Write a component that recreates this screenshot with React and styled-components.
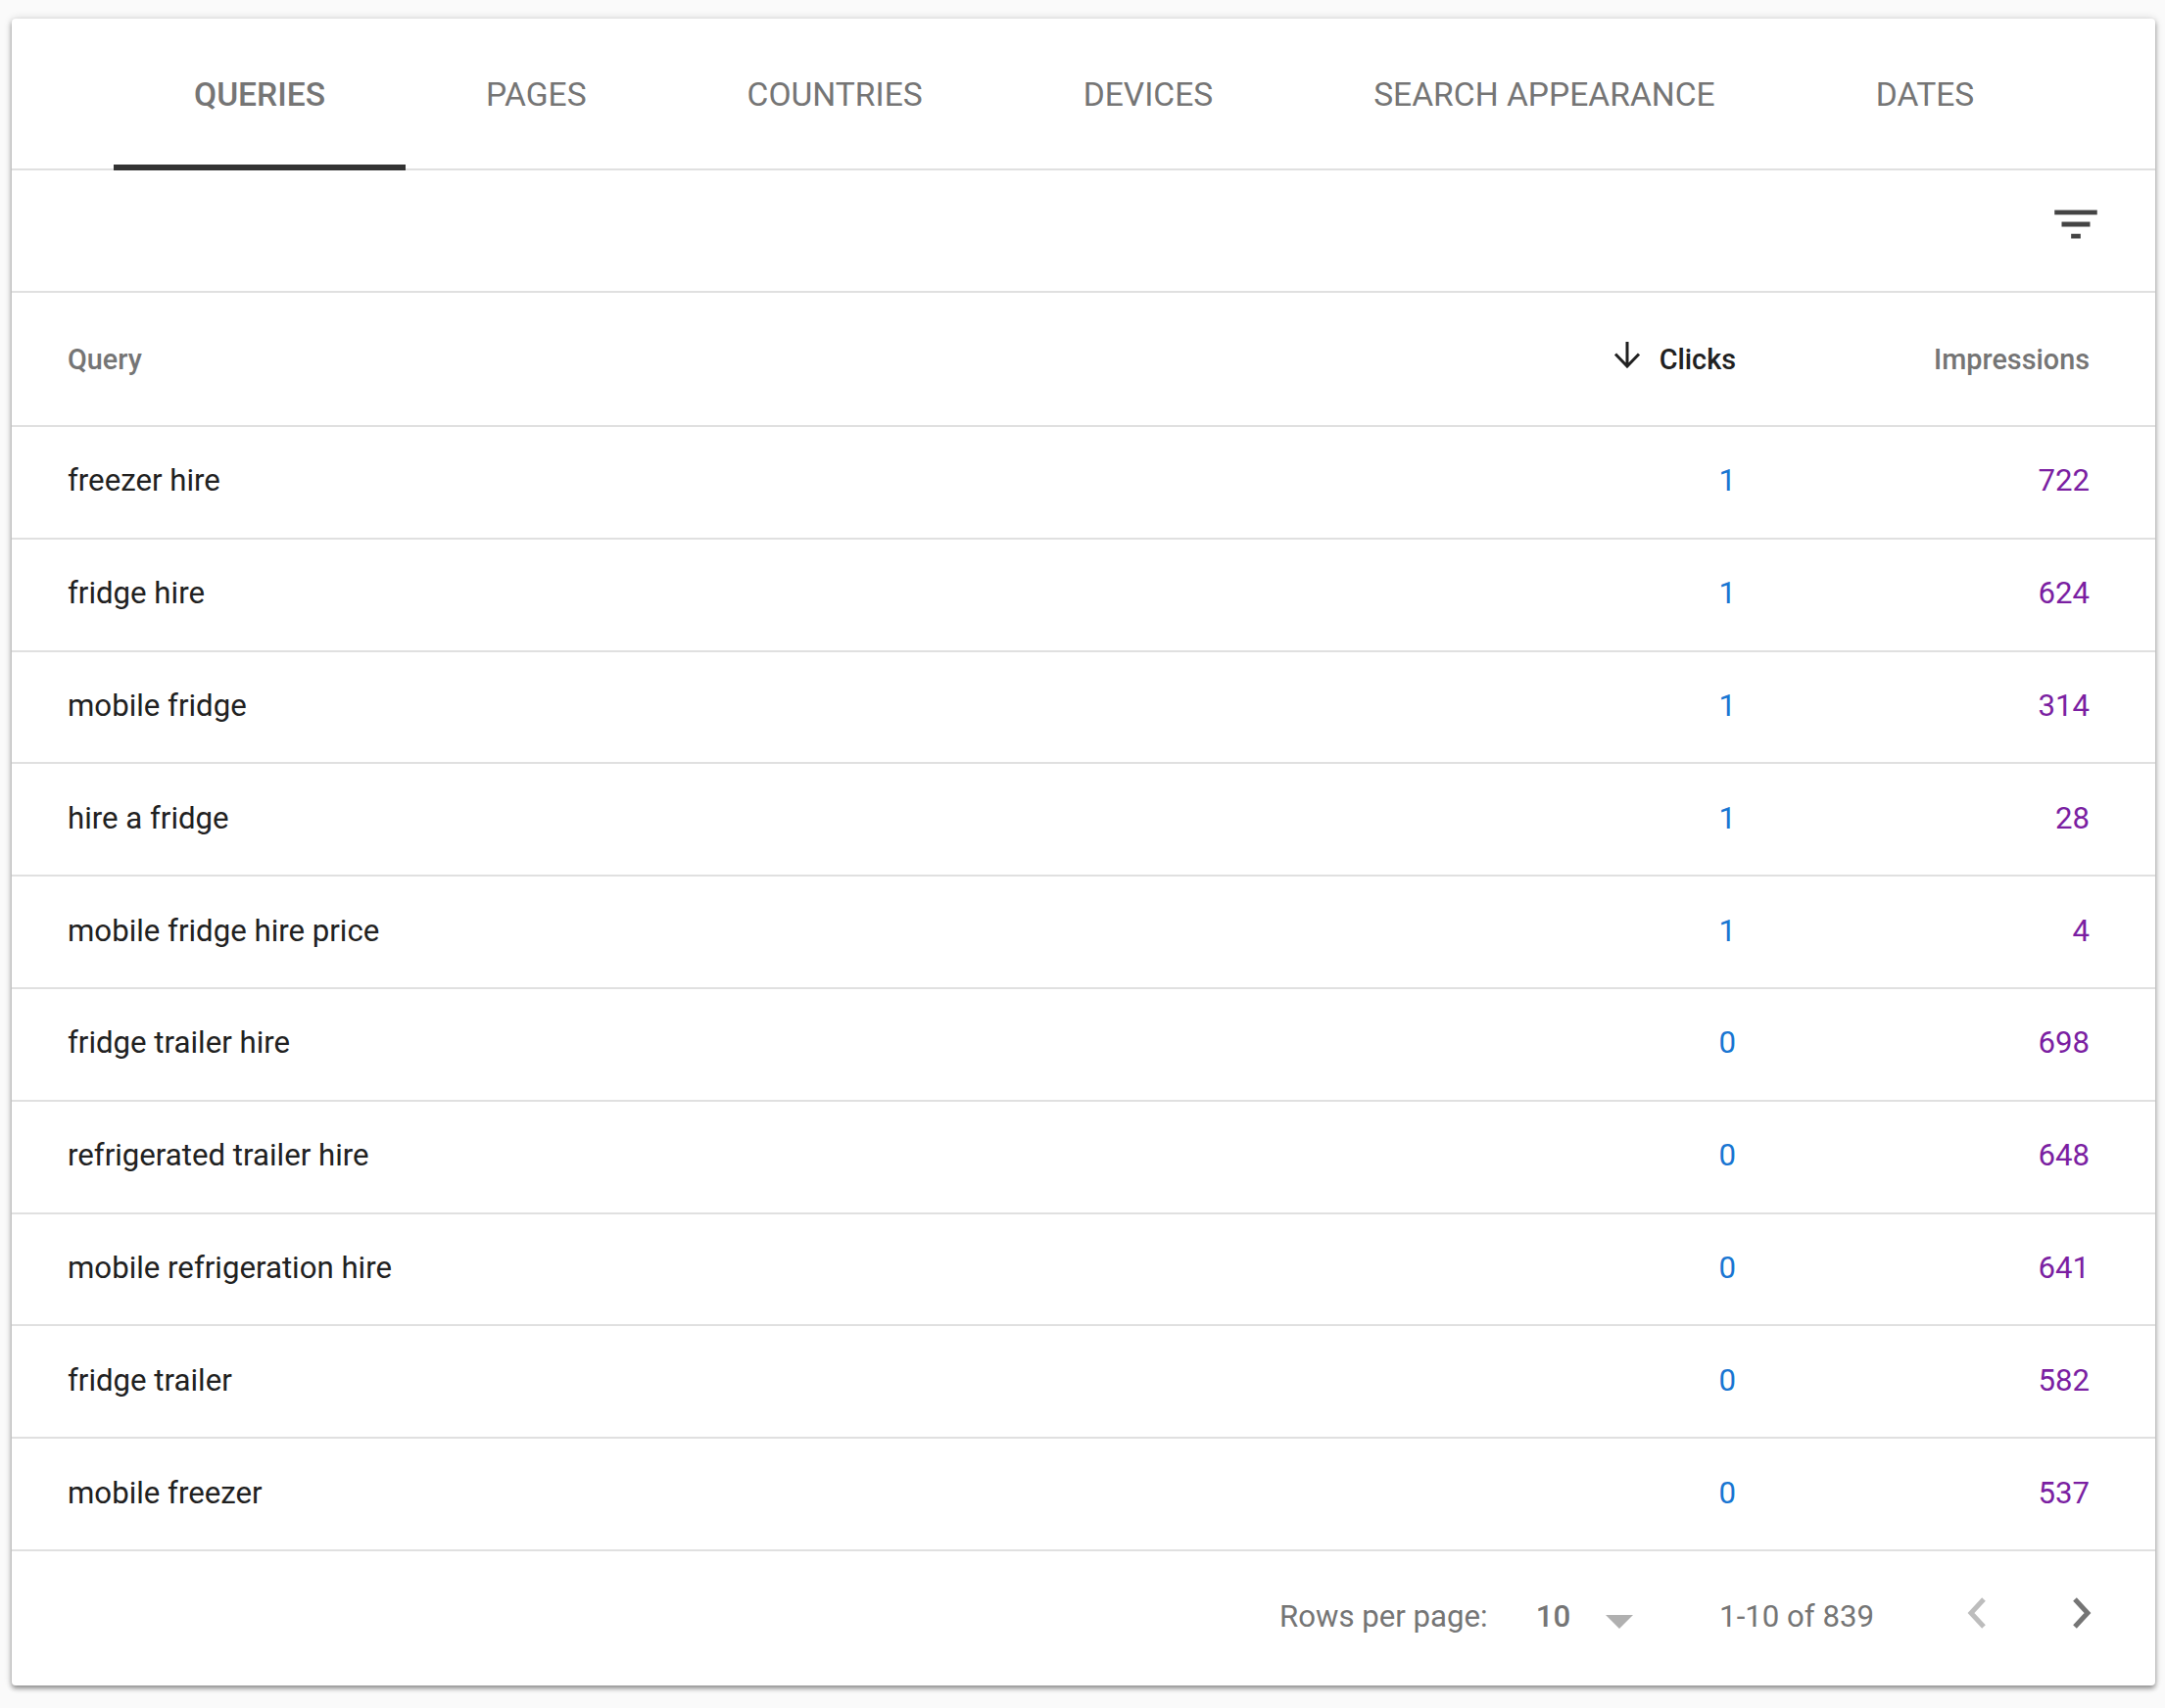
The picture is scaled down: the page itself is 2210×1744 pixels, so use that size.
import React from 'react'
import styled, { createGlobalStyle } from 'styled-components'

const GlobalStyle = createGlobalStyle`
  html, body {
    margin: 0;
    padding: 0;
    background: #fafafa;
    font-family: Roboto, "Liberation Sans", sans-serif;
  }
`;
const Page = styled.div`
  width: 2210px;
  height: 1744px;
  padding: 19px 10px 0 12px;
  box-sizing: border-box;
  overflow: hidden;
`;
const Card = styled.div`
  width: 2188px;
  height: 1702px;
  background: #fff;
  border-radius: 4px;
  box-shadow: 0 3px 5px rgba(0, 0, 0, 0.4), 0 0 8px rgba(0, 0, 0, 0.14);
  display: flex;
  flex-direction: column;
`;
const Tabs = styled.div`
  display: flex;
  height: 155px;
  padding-left: 104px;
  box-sizing: border-box;
  border-bottom: 2px solid #e0e0e0;
`;
const Tab = styled.div`
  display: flex;
  align-items: center;
  height: 155px;
  padding: 5px 82px 0;
  box-sizing: border-box;
  font-size: 33.6px;
  font-weight: ${({ $active }) => ($active ? 500 : 400)};
  color: #757575;
  border-bottom: 6px solid ${({ $active }) => ($active ? '#333' : 'transparent')};
`;
const FilterBar = styled.div`
  display: flex;
  justify-content: flex-end;
  align-items: flex-start;
  height: 125px;
  padding: 26px 52px 0 0;
  box-sizing: border-box;
  border-bottom: 2px solid #e0e0e0;
`;
const Row = styled.div`
  display: flex;
  align-items: center;
  height: ${({ $head }) => ($head ? '137px' : '114.8px')};
  padding: 0 67px ${({ $head }) => ($head ? 0 : '3px')} 57px;
  box-sizing: border-box;
  border-bottom: 2px solid #e0e0e0;
  font-size: ${({ $head }) => ($head ? '28.8px' : '31.2px')};
  font-weight: ${({ $head }) => ($head ? 500 : 400)};
`;
const QueryCell = styled.div`
  flex: 1;
  color: ${({ $head }) => ($head ? '#757575' : '#212121')};
`;
const ClicksCell = styled.div`
  display: flex;
  align-items: center;
  justify-content: flex-end;
  gap: 19px;
  color: ${({ $head }) => ($head ? '#212121' : '#1976d2')};
`;
const ImpressionsCell = styled.div`
  width: 361px;
  text-align: right;
  color: ${({ $head }) => ($head ? '#757575' : '#7b1fa2')};
`;
const SortArrow = styled.svg`
  width: 28px;
  height: 28px;
  margin-bottom: 10px;
  fill: none;
  stroke: #212121;
  stroke-width: 3;
`;
const Footer = styled.div`
  display: flex;
  align-items: center;
  justify-content: flex-end;
  flex: 1;
  padding: 0 62px 4px 0;
  font-size: 31.2px;
  color: #757575;
`;
const RowsLabel = styled.span``;
const RowsValue = styled.span`
  margin-left: 49px;
  font-weight: 500;
`;
const Caret = styled.span`
  width: 0;
  height: 0;
  margin: 12px 0 0 36px;
  border-left: 14px solid transparent;
  border-right: 14px solid transparent;
  border-top: 14px solid #b0b0b0;
`;
const PageInfo = styled.span`
  margin-left: 88px;
`;
const PagerButton = styled.svg`
  width: 26px;
  height: 34px;
  margin-left: ${({ $first }) => ($first ? '92px' : '81px')};
  margin-bottom: 6px;
  fill: none;
  stroke: ${({ $off }) => ($off ? '#bdbdbd' : '#757575')};
  stroke-width: 5;
`;

const rows = [
  ['freezer hire', 1, 722],
  ['fridge hire', 1, 624],
  ['mobile fridge', 1, 314],
  ['hire a fridge', 1, 28],
  ['mobile fridge hire price', 1, 4],
  ['fridge trailer hire', 0, 698],
  ['refrigerated trailer hire', 0, 648],
  ['mobile refrigeration hire', 0, 641],
  ['fridge trailer', 0, 582],
  ['mobile freezer', 0, 537],
];

const tabs = ['QUERIES', 'PAGES', 'COUNTRIES', 'DEVICES', 'SEARCH APPEARANCE', 'DATES'];

const App = () => {
  return (
    <Page>
      <GlobalStyle />
      <Card>
        <Tabs>
          {tabs.map((t, i) => (
            <Tab key={t} $active={i === 0}>{t}</Tab>
          ))}
        </Tabs>
        <FilterBar>
          <svg width="58" height="58" viewBox="0 0 24 24" fill="#444">
            <path d="M10 18h4v-2h-4v2zM3 6v2h18V6H3zm3 7h12v-2H6v2z" />
          </svg>
        </FilterBar>
        <Row $head>
          <QueryCell $head>Query</QueryCell>
          <ClicksCell $head>
            <SortArrow viewBox="0 0 28 28">
              <path d="M14 1v25M2 13.5l12 12.5 12-12.5" />
            </SortArrow>
            Clicks
          </ClicksCell>
          <ImpressionsCell $head>Impressions</ImpressionsCell>
        </Row>
        {rows.map(([q, c, n]) => (
          <Row key={q}>
            <QueryCell>{q}</QueryCell>
            <ClicksCell>{c}</ClicksCell>
            <ImpressionsCell>{n}</ImpressionsCell>
          </Row>
        ))}
        <Footer>
          <RowsLabel>Rows per page:</RowsLabel>
          <RowsValue>10</RowsValue>
          <Caret />
          <PageInfo>1-10 of 839</PageInfo>
          <PagerButton $first $off viewBox="0 0 26 34">
            <path d="M20 3L7 17l13 14" />
          </PagerButton>
          <PagerButton viewBox="0 0 26 34">
            <path d="M6 3l13 14L6 31" />
          </PagerButton>
        </Footer>
      </Card>
    </Page>
  )
}

export default App
